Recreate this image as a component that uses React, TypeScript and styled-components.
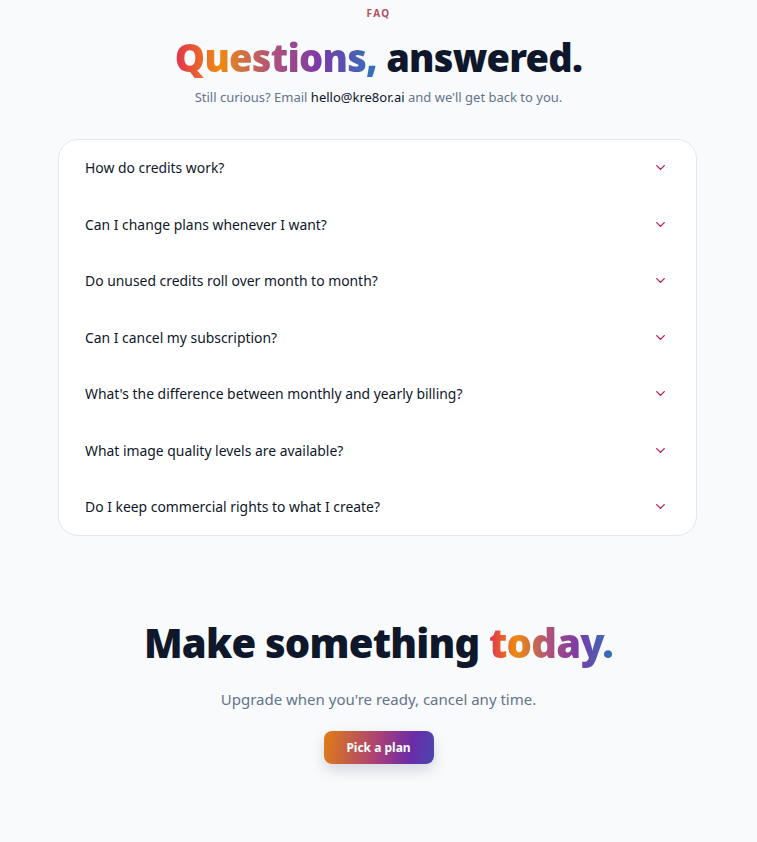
import React from "react";
import styled, { createGlobalStyle } from "styled-components";

const GlobalStyle = createGlobalStyle`
  html, body {
    margin: 0;
    padding: 0;
    background: #f8fafc;
  }
  body {
    font-family: "Noto Sans", "Liberation Sans", sans-serif;
    color: #0f172a;
  }
`;

const brand = `linear-gradient(90deg, #e2334f 0%, #ee8a12 22%, #b0527a 48%, #7a3aa8 72%, #2f74bb 100%)`;

const Page = styled.main`
  display: flex;
  flex-direction: column;
  align-items: center;
  padding: 6px 0 76px;
`;

const Eyebrow = styled.span`
  font-size: 10px;
  font-weight: 700;
  letter-spacing: 0.14em;
  color: #b2505c;
`;

const Heading = styled.h2<{ $size: number }>`
  margin: 0;
  font-family: "Noto Sans", Lato, sans-serif;
  font-weight: 900;
  font-size: ${(p) => p.$size}px;
  letter-spacing: -0.02em;
  line-height: 1.2;
  color: #0f172a;
`;

const Gradient = styled.span`
  background: ${brand};
  -webkit-background-clip: text;
  background-clip: text;
  color: transparent;
`;

const Lead = styled.p<{ $size: number }>`
  margin: 0;
  font-size: ${(p) => p.$size}px;
  color: #64748b;
  a {
    color: #0f172a;
    text-decoration: none;
  }
`;

const Card = styled.div`
  box-sizing: border-box;
  width: 639px;
  margin-top: 33px;
  margin-right: 2px;
  background: #fff;
  border: 1px solid #e2e8f0;
  border-radius: 20px;
`;

const Row = styled.button`
  display: flex;
  align-items: center;
  justify-content: space-between;
  width: 100%;
  height: 56.5px;
  padding: 0 28px 0 26px;
  border: 0;
  background: transparent;
  font-family: inherit;
  font-size: 13.9px;
  font-weight: 400;
  color: #0f172a;
  text-align: left;
  cursor: pointer;
`;

const Chevron = () => (
  <svg width="15" height="15" viewBox="0 0 24 24" fill="none" stroke="#be185d" strokeWidth="2.2" strokeLinecap="round" strokeLinejoin="round">
    <path d="M6 9l6 6 6-6" />
  </svg>
);

const Cta = styled.section`
  display: flex;
  flex-direction: column;
  align-items: center;
  margin-top: 83px;
`;

const PlanButton = styled.button`
  margin-top: 22px;
  width: 110px;
  height: 33px;
  border: 0;
  border-radius: 8px;
  background: linear-gradient(100deg, #e07d16 0%, #a83f78 50%, #6a2ca8 78%, #4a47b0 100%);
  color: #fff;
  font-family: inherit;
  font-size: 12px;
  font-weight: 700;
  box-shadow: 0 6px 14px rgba(15, 23, 42, 0.15);
  cursor: pointer;
`;

const questions = [
  "How do credits work?",
  "Can I change plans whenever I want?",
  "Do unused credits roll over month to month?",
  "Can I cancel my subscription?",
  "What's the difference between monthly and yearly billing?",
  "What image quality levels are available?",
  "Do I keep commercial rights to what I create?",
];

export default function App() {
  return (
    <>
      <GlobalStyle />
      <Page>
        <Eyebrow>FAQ</Eyebrow>
        <Heading $size={38} style={{ marginTop: 15 }}>
          <Gradient>Questions,</Gradient> answered.
        </Heading>
        <Lead $size={13} style={{ marginTop: 7 }}>
          Still curious? Email <a href="mailto:hello@kre8or.ai">hello@kre8or.ai</a> and we'll get back to you.
        </Lead>
        <Card>
          {questions.map((q) => (
            <Row key={q}>
              <span>{q}</span>
              <Chevron />
            </Row>
          ))}
        </Card>
        <Cta>
          <Heading $size={40}>
            Make something <Gradient>today.</Gradient>
          </Heading>
          <Lead $size={15} style={{ marginTop: 22 }}>
            Upgrade when you're ready, cancel any time.
          </Lead>
          <PlanButton>Pick a plan</PlanButton>
        </Cta>
      </Page>
    </>
  );
}
